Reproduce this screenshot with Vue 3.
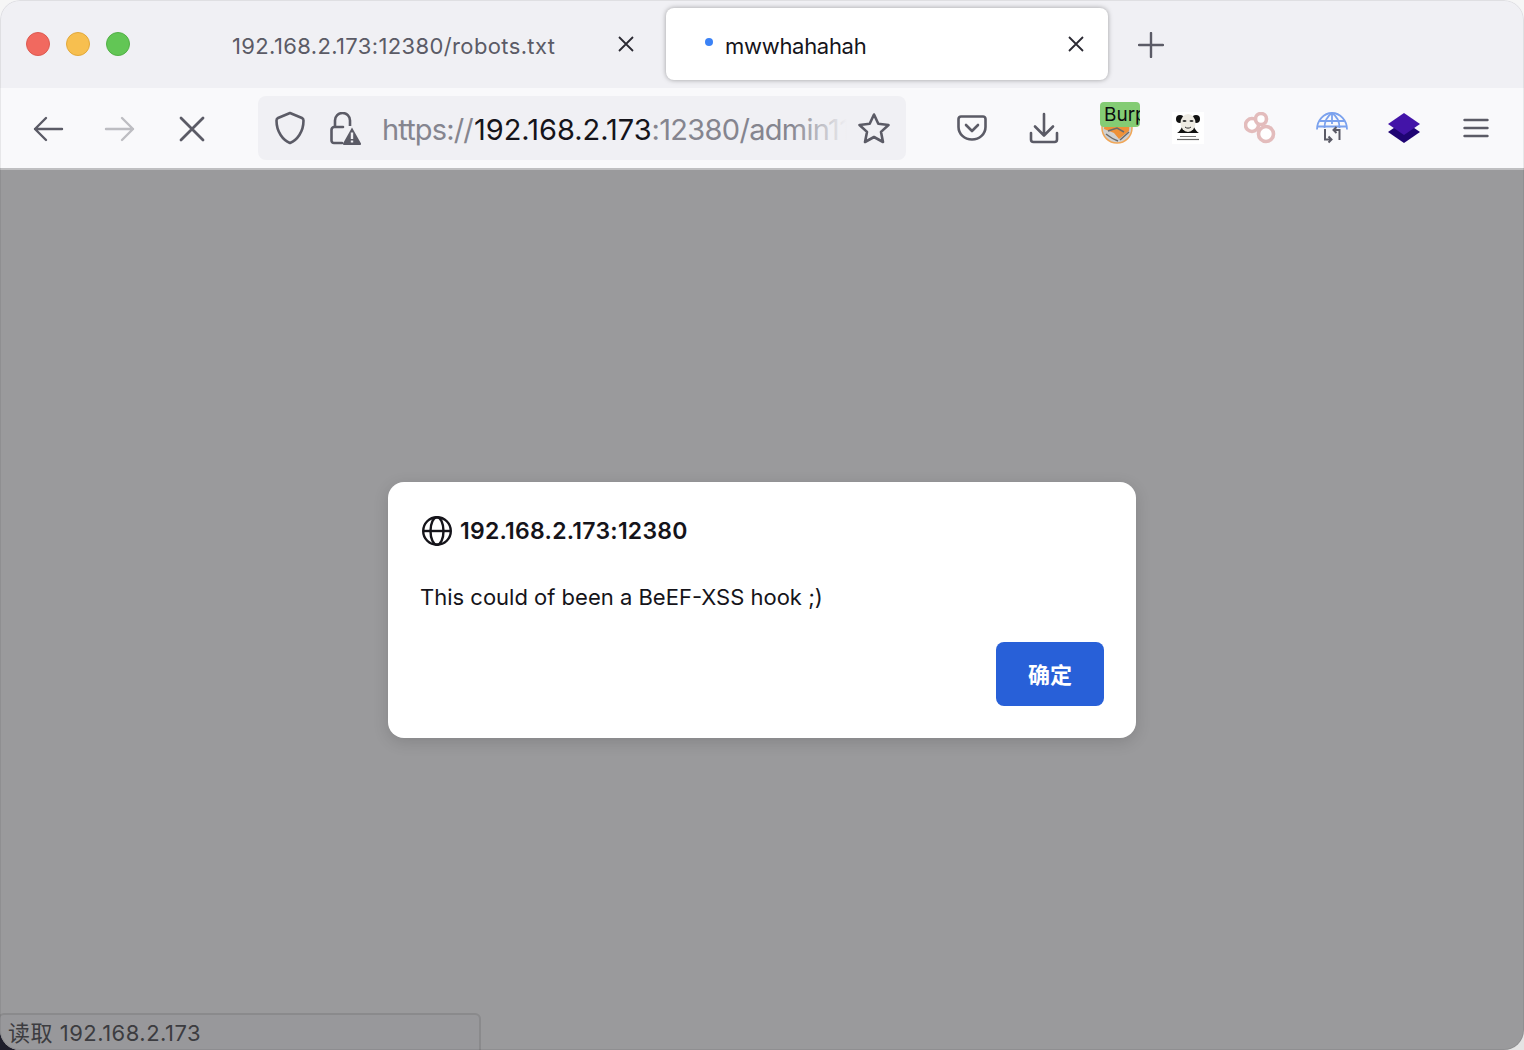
<script setup>
const tabs = [
  { id: 1, title: '192.168.2.173:12380/robots.txt', active: false },
  { id: 2, title: 'mwwhahahah', active: true }
]
</script>

<template>
  <div class="window">
    <header class="tabbar">
      <div class="lights">
        <span class="light red"></span>
        <span class="light yellow"></span>
        <span class="light green"></span>
      </div>
      <div class="tabs">
        <div v-for="t in tabs" :key="t.id" class="tab" :class="{ active: t.active }">
          <span v-if="t.active" class="dot"></span>
          <span class="tab-title">{{ t.title }}</span>
          <svg class="tab-close" width="18" height="18" viewBox="0 0 18 18"><path d="M2 2 16 16M16 2 2 16" stroke="#2b2a33" stroke-width="1.800" fill="none"/></svg>
        </div>
      </div>
      <svg class="new-tab" width="26" height="26" viewBox="0 0 26 26"><path d="M13 1v24M1 13h24" stroke="#5b5b66" stroke-width="2.400" fill="none" stroke-linecap="round"/></svg>
    </header>

    <nav class="toolbar">
      <div class="nav-btns">
        <svg width="32" height="32" viewBox="0 0 32 32"><path d="M30 16H3M14 5 3 16 14 27" stroke="#5b5b66" stroke-width="2.400" fill="none" stroke-linecap="round" stroke-linejoin="round"/></svg>
        <svg width="32" height="32" viewBox="0 0 32 32"><path d="M2 16h27M18 5 29 16 18 27" stroke="#bdbdc2" stroke-width="2.400" fill="none" stroke-linecap="round" stroke-linejoin="round"/></svg>
        <svg width="32" height="32" viewBox="0 0 32 32"><path d="M5 5 27 27M27 5 5 27" stroke="#5b5b66" stroke-width="2.800" fill="none" stroke-linecap="round"/></svg>
      </div>

      <div class="urlbar">
        <svg class="shield" width="30" height="34" viewBox="0 0 30 34"><path d="M15 2 27 7c1 .500 1.500 1.200 1.500 2.500C28.500 21 22 29 15 32 8 29 1.500 21 1.500 9.500 1.500 8.200 2 7.500 3 7Z" fill="none" stroke="#5b5b66" stroke-width="2.600" stroke-linejoin="round"/></svg>
        <svg class="lock" width="32" height="34" viewBox="0 0 32 34"><path d="M6 15V8.500a7.500 7.500 0 0 1 15 0V14" fill="none" stroke="#5b5b66" stroke-width="2.600"/><path d="M14 15H5A3 3 0 0 0 2.500 18v10.500A2.500 2.500 0 0 0 5 31h8" fill="none" stroke="#5b5b66" stroke-width="2.600" stroke-linecap="round"/><path d="M23 15.500 32 31.500a1 1 0 0 1-1 1.500H15a1 1 0 0 1-1-1.500Z" fill="#5b5b66"/><path d="M23 20.500v6.500M23 28.500v2" stroke="#f0f0f4" stroke-width="2.400"/></svg>
        <div class="url"><span class="dim scheme">https://</span><span class="host">192.168.2.173</span><span class="dim tail">:12380/admin11</span><span class="fade"></span></div>
        <svg class="star" width="34" height="33" viewBox="0 0 34 33"><path d="M17 2.500 21.300 11.700 31.500 13 24 19.900 26 30 17 25 8 30 10 19.900 2.500 13 12.700 11.700Z" fill="none" stroke="#5b5b66" stroke-width="2.600" stroke-linejoin="round"/></svg>
      </div>

      <div class="actions">
        <div class="act">
          <svg width="30" height="26" viewBox="0 0 30 26"><path d="M4 1.500h22A2.500 2.500 0 0 1 28.500 4v8c0 7-6 12.500-13.500 12.500S1.500 19 1.500 12V4A2.500 2.500 0 0 1 4 1.500Z" fill="none" stroke="#5b5b66" stroke-width="2.600"/><path d="M9 10l6 6 6-6" fill="none" stroke="#5b5b66" stroke-width="2.600" stroke-linecap="round" stroke-linejoin="round"/></svg>
        </div>
        <div class="act">
          <svg width="30" height="32" viewBox="0 0 30 32"><path d="M15 2v21M6 14.500l9 9 9-9" fill="none" stroke="#5b5b66" stroke-width="2.600" stroke-linecap="round" stroke-linejoin="round"/><path d="M2 21v6.500A2.500 2.500 0 0 0 4.500 30h21a2.500 2.500 0 0 0 2.500-2.500V21" fill="none" stroke="#5b5b66" stroke-width="2.600" stroke-linecap="round"/></svg>
        </div>
        <div class="act burp">
          <svg class="burp-art" width="32" height="32" viewBox="0 0 32 32"><circle cx="16" cy="16" r="15" fill="#d0d0d0" stroke="#f0a657" stroke-width="1.500"/><path d="M4 8h25l-1 11-10 8-5-6-10-4Z" fill="#ee9138"/><path d="M7 19l9-3 7 4M5 22c4 3 9 6 12 7M19 28l9-8" stroke="#6a6a6a" stroke-width="1.500" fill="none"/></svg>
          <span class="burp-badge"><span>Burp</span></span>
        </div>
        <div class="act">
          <svg width="32" height="32" viewBox="0 0 32 32"><rect width="32" height="32" fill="#fff"/><circle cx="8" cy="7" r="4" fill="#111"/><circle cx="24" cy="7" r="4" fill="#111"/><path d="M5 21c2-1 4-4 5-6h12c1 2 3 5 5 6Z" fill="#111"/><ellipse cx="16" cy="11" rx="7.500" ry="9" fill="#eeebe3"/><ellipse cx="12.500" cy="9" rx="2" ry="1" fill="#333"/><ellipse cx="19.500" cy="9" rx="2" ry="1" fill="#333"/><path d="M13 15c1.500 1.500 4.500 1.500 6 0" stroke="#333" stroke-width="1" fill="none"/><path d="M8 24.500h16" stroke="#777" stroke-width="1"/><path d="M5 27.500h22" stroke="#666" stroke-width="1.200"/></svg>
        </div>
        <div class="act">
          <svg width="32" height="32" viewBox="0 0 32 32"><g fill="#fff" stroke="#e3bcbc" stroke-width="3.600"><circle cx="8" cy="13" r="6.500"/><circle cx="17" cy="7" r="5.500"/><circle cx="22" cy="22" r="7.500"/></g></svg>
        </div>
        <div class="act">
          <svg width="32" height="32" viewBox="0 0 32 32"><g fill="none" stroke="#7ba2ee" stroke-width="1.800"><path d="M1 17.500A15 16.500 0 0 1 31 17.500"/><path d="M16 1C10 5 8.500 10 8.500 16M16 1C22 5 23.500 10 23.500 16M16 1v11M3.500 9h25M1.500 14.500h29"/></g><g fill="none" stroke="#5b5b66" stroke-width="2"><path d="M9 17v10.500h6M12.500 24.500l3 3-3 3"/><path d="M23.500 28V18h-6M20.500 15l-3 3 3 3"/></g></svg>
        </div>
        <div class="act">
          <svg width="32" height="30" viewBox="0 0 32 30"><path d="M16 8 32 19 16 30 0 19Z" fill="#1f0473"/><path d="M16 0 32 11 16 22 0 11Z" fill="#4314a8"/></svg>
        </div>
        <div class="act">
          <svg width="26" height="20" viewBox="0 0 26 20"><path d="M1.500 2h23M1.500 10h23M1.500 18h23" stroke="#5b5b66" stroke-width="2.400" stroke-linecap="round"/></svg>
        </div>
      </div>
    </nav>

    <main class="content">
      <section class="dialog">
        <div class="dlg-head">
          <svg width="32" height="32" viewBox="0 0 32 32"><g fill="none" stroke="#15141a" stroke-width="2.400"><circle cx="16" cy="16" r="13.800"/><ellipse cx="16" cy="16" rx="6.500" ry="13.800"/><path d="M2.200 16h27.600"/></g></svg>
          <span>192.168.2.173:12380</span>
        </div>
        <p class="dlg-body">This could of been a BeEF-XSS hook ;)</p>
        <div class="dlg-foot"><button class="ok">确定</button></div>
      </section>
      <div class="status">读取 192.168.2.173</div>
    </main>
  </div>
</template>

<style>
html {
  background:
    linear-gradient(to right, #1d1d2b 40px, #e4e4e4 40px) bottom / 100% 40px no-repeat,
    #f6f6f6;
}
body { margin: 0; background: transparent; }
</style>

<style scoped>
.window {
  width: 1524px;
  height: 1050px;
  display: flex;
  flex-direction: column;
  overflow: hidden;
  border-radius: 20px;
  font-family: Inter, "Noto Sans CJK SC", sans-serif;
  position: relative;
}
.window::after {
  content: "";
  position: absolute;
  inset: 0;
  border: 1px solid rgba(0, 0, 0, 0.07);
  border-radius: 20px;
  pointer-events: none;
}
.tabbar {
  height: 88px;
  flex: none;
  background: #f0f0f4;
  display: flex;
  align-items: flex-start;
  box-sizing: border-box;
  padding-top: 8px;
}
.lights {
  display: flex;
  gap: 16px;
  padding: 24px 0 0 26px;
  width: 216px;
  box-sizing: border-box;
  flex: none;
}
.light {
  width: 24px;
  height: 24px;
  border-radius: 50%;
  box-sizing: border-box;
}
.red { background: #f1695f; border: 1px solid #dd5a50; }
.yellow { background: #f7bf4f; border: 1px solid #e2a93b; }
.green { background: #62c655; border: 1px solid #52b046; }
.tabs {
  display: flex;
  gap: 8px;
  flex: none;
}
.tab {
  width: 442px;
  height: 72px;
  box-sizing: border-box;
  padding: 0 23px 0 16px;
  display: flex;
  align-items: center;
  border-radius: 8px;
  color: #5b5b66;
  font-size: 22px;
  letter-spacing: 0.37px;
}
.tab.active {
  background: #fff;
  color: #15141a;
  padding-left: 39px;
  letter-spacing: -0.3px;
  box-shadow: 0 0 5px rgba(0, 0, 0, 0.35);
}
.tab-title { flex: 1; white-space: nowrap; padding-top: 4px; }
.dot {
  width: 8px;
  height: 8px;
  border-radius: 50%;
  background: #3b82f6;
  margin-right: 12px;
  margin-top: -4px;
}
.tab-close { flex: none; }
.new-tab { margin: 24px 0 0 30px; flex: none; }
.toolbar {
  height: 82px;
  flex: none;
  box-sizing: border-box;
  background: #f9f9fb;
  border-bottom: 2px solid #bfbfc1;
  display: flex;
  align-items: flex-start;
}
.nav-btns {
  display: flex;
  gap: 40px;
  padding: 25px 0 0 32px;
  width: 258px;
  box-sizing: border-box;
  flex: none;
}
.urlbar {
  width: 648px;
  height: 64px;
  margin-top: 8px;
  box-sizing: border-box;
  background: #f0f0f4;
  border-radius: 8px;
  display: flex;
  align-items: center;
  padding: 0 15px 0 17px;
  flex: none;
}
.shield { flex: none; }
.lock { flex: none; margin-left: 24px; margin-top: 1px; }
.url {
  flex: 1;
  min-width: 0;
  margin: 2px 10px 0 21px;
  overflow: hidden;
  white-space: nowrap;
  font-size: 29px;
  position: relative;
  letter-spacing: -0.02px;
}
.host { color: #15141a; margin-left: 1px; }
.dim { color: #85858f; }
.scheme { letter-spacing: -0.85px; }
.tail { letter-spacing: -0.7px; }
.fade {
  position: absolute;
  top: 0;
  right: 0;
  bottom: 0;
  width: 56px;
  background: linear-gradient(to right, rgba(240, 240, 244, 0), #f0f0f4);
}
.star { flex: none; }
.actions {
  display: flex;
  padding-left: 30px;
  flex: none;
}
.act {
  width: 72px;
  height: 80px;
  display: flex;
  align-items: center;
  justify-content: center;
  position: relative;
}
.burp-art { margin: 0 0 0 2px; }
.burp-badge {
  position: absolute;
  left: 20px;
  top: 14px;
  width: 40px;
  height: 25px;
  background: #84cc74;
  border-radius: 4px;
  overflow: hidden;
  font-size: 19px;
  line-height: 25px;
  color: #0c0c10;
  padding-left: 4px;
  box-sizing: border-box;
  white-space: nowrap;
}
.content {
  flex: 1;
  background: #9a9a9c;
  display: flex;
  align-items: center;
  justify-content: center;
  position: relative;
}
.dialog {
  width: 748px;
  height: 256px;
  box-sizing: border-box;
  background: #fff;
  border-radius: 16px;
  padding: 33px 32px 32px 33px;
  display: flex;
  flex-direction: column;
  box-shadow: 0 4px 16px rgba(0, 0, 0, 0.14);
}
.dlg-head {
  display: flex;
  align-items: center;
  gap: 7px;
  font-size: 23px;
  font-weight: 600;
  letter-spacing: 0.26px;
  color: #15141a;
  height: 32px;
}
.dlg-body {
  margin: 34px 0 0 -1px;
  font-size: 22px;
  line-height: 32px;
  color: #15141a;
}
.dlg-foot {
  margin-top: auto;
  display: flex;
  justify-content: flex-end;
}
.ok {
  width: 108px;
  height: 64px;
  border: none;
  border-radius: 8px;
  background: #2860d8;
  color: #fff;
  padding: 0 0 2px;
  font: 700 22px "Noto Sans CJK SC", sans-serif;
}
.status {
  position: absolute;
  left: -2px;
  bottom: -3px;
  width: 483px;
  height: 40px;
  box-sizing: border-box;
  border: 2px solid #8a8a8c;
  border-radius: 6px 6px 0 0;
  background: #98989b;
  padding-left: 8px;
  font-size: 22px;
  line-height: 36px;
  letter-spacing: 0.5px;
  color: #3c3c40;
  white-space: nowrap;
}
</style>
